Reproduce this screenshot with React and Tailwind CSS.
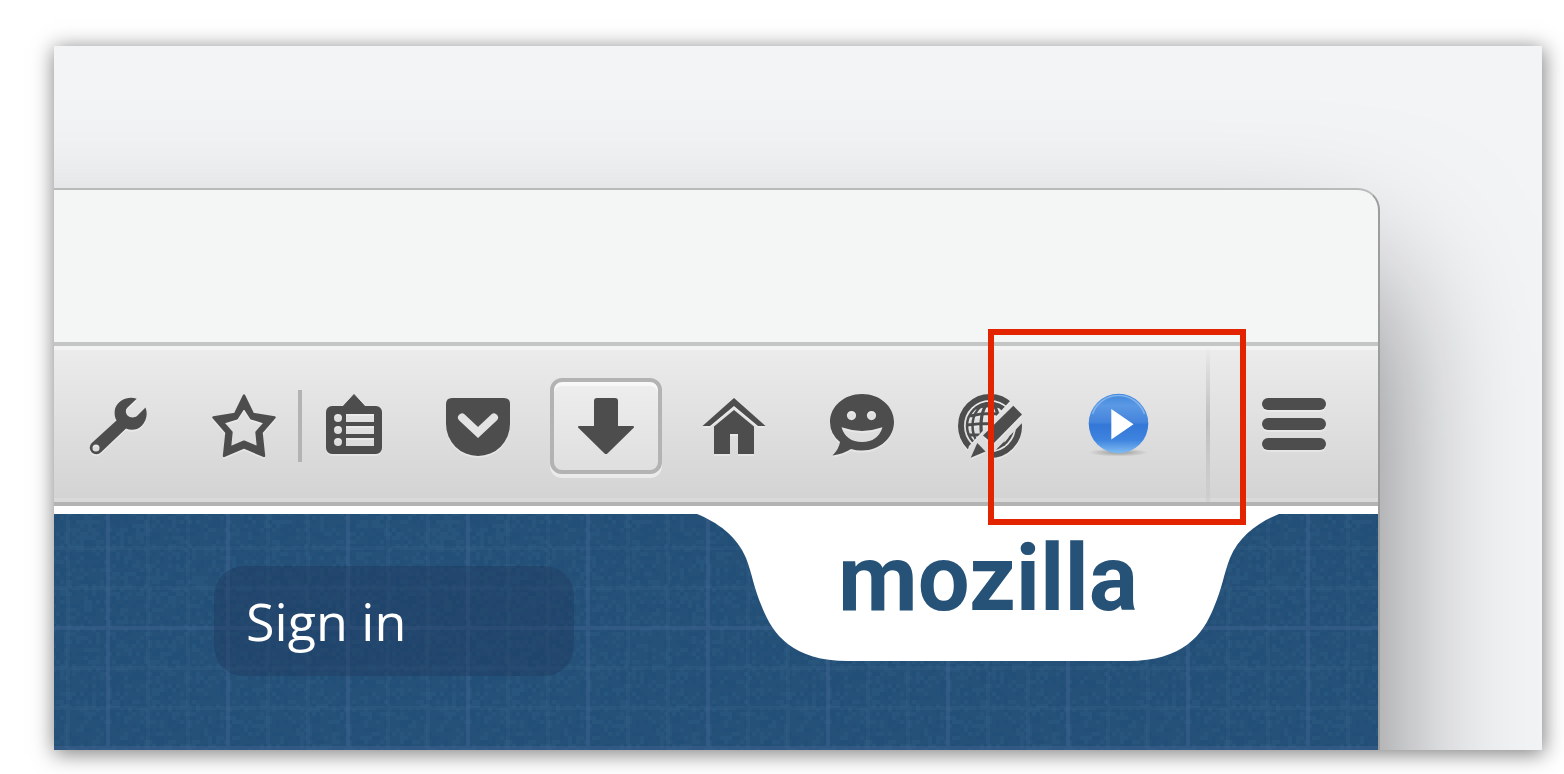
import React from "react";

const ICON = "#4d4d4d";

function Icon({ children, shadow = true }) {
  return (
    <svg
      viewBox="0 0 64 72"
      aria-hidden="true"
      className={
        shadow
          ? "h-[72px] w-16 overflow-visible drop-shadow-[0_2px_0_rgba(255,255,255,0.3)]"
          : "h-[72px] w-16 overflow-visible"
      }
      fill={ICON}
    >
      {children}
    </svg>
  );
}

function ToolButton({ label, children }) {
  return (
    <button type="button" aria-label={label} className="flex h-24 w-28 shrink-0 items-center justify-center">
      {children}
    </button>
  );
}

function WrenchIcon() {
  return (
    <Icon>
      <path
        transform="translate(-2 0)"
        fillRule="evenodd"
        d="M52.7 8.7C44 6 34.5 10 31.3 18C30 22.500 30.500 27 32.500 30.500L7.500 53.300A6.500 6.500 0 1 0 17 62.200L42 38.500C47 40.800 53 40.300 57.500 36C62.500 31 64 24 61.500 17.500L53.500 25.500C50.500 28.300 46 28 43.500 25.500C41.300 23 41.300 19.800 43.500 17.500ZM12 54.600A3.500 3.500 0 1 1 12 61.600A3.500 3.500 0 1 1 12 54.600Z"
      />
    </Icon>
  );
}

function StarIcon() {
  return (
    <Icon>
      <path
        fillRule="evenodd"
        stroke={ICON}
        strokeWidth="2.4"
        strokeLinejoin="round"
        d="M32 5.500L41 24L62.500 27.500L49.500 42.500L52 66L32 57.500L12 66L14.500 42.500L1.500 27.500L23 24ZM32 17L24.800 28.300L11 32.500L19.500 42.200L18 57.500L32 51.600L46 57.500L44.500 42.200L53 32.500L39.200 28.300Z"
      />
    </Icon>
  );
}

function ListIcon() {
  return (
    <Icon>
      <path d="M32 4.500L21 16.500H43Z" stroke={ICON} strokeLinejoin="round" />
      <path
        fillRule="evenodd"
        d="M10 16H54A6 6 0 0 1 60 22V58A6 6 0 0 1 54 64H10A6 6 0 0 1 4 58V22A6 6 0 0 1 10 16ZM24 24V32H52V24ZM24 36V44H52V36ZM24 48V56H52V48ZM16 24A4 4 0 1 0 16 32A4 4 0 1 0 16 24ZM16 36A4 4 0 1 0 16 44A4 4 0 1 0 16 36ZM16 48A4 4 0 1 0 16 56A4 4 0 1 0 16 48Z"
      />
    </Icon>
  );
}

function PocketIcon() {
  return (
    <Icon>
      <path d="M6 8H58Q64 8 64 14V34A32 32 0 0 1 0 34V14Q0 8 6 8Z" />
      <path
        d="M16 27.500L32 42.500L48 27.500"
        fill="none"
        stroke="#e3e3e3"
        strokeWidth="8"
        strokeLinecap="round"
      />
    </Icon>
  );
}

function DownloadIcon() {
  return (
    <Icon shadow={false}>
      <path
        stroke={ICON}
        strokeWidth="2"
        strokeLinejoin="round"
        d="M23 9H41Q43 9 43 11V37H59L33 62.500Q32 63.500 31 62.500L5 37H21V11Q21 9 23 9Z"
      />
    </Icon>
  );
}

function HomeIcon() {
  return (
    <Icon>
      <path d="M32 8L63.500 36H56L32 16L8 36H0.500Z" />
      <path d="M32 20L52 36.500V64H36V44H28V64H12V36.500Z" />
    </Icon>
  );
}

function ChatIcon() {
  return (
    <Icon>
      <path
        fillRule="evenodd"
        d="M32 4C50 4 64 16.500 64 32S50 60.500 32 60.500Q26 60.500 21 59Q13 64 2.500 65.500Q9 59 10 52Q0 44 0 32C0 16.500 14 4 32 4ZM21.500 21A4.600 4.600 0 1 0 21.500 30.200A4.600 4.600 0 1 0 21.500 21ZM41.500 21A4.600 4.600 0 1 0 41.500 30.200A4.600 4.600 0 1 0 41.500 21ZM11.500 37.300Q32 44.500 52.500 37.300Q48 52 32 52Q16 52 11.500 37.300Z"
      />
    </Icon>
  );
}

function GlobeIcon() {
  return (
    <Icon>
      <defs>
        <mask id="globe-cut">
          <rect x="-4" y="0" width="72" height="72" fill="#fff" />
          <path d="M52 11L68 4V29L30 68L26 74L6 72L11 56Z" fill="#000" />
        </mask>
      </defs>
      <g mask="url(#globe-cut)" fill="none" stroke={ICON}>
        <circle cx="32" cy="36" r="29" strokeWidth="6" />
        <circle cx="32" cy="36" r="23" strokeWidth="2.500" />
        <g strokeWidth="3.200">
          <path d="M32 12V60M12 26Q32 21 52 26M9 35Q32 32 55 35M11 45Q32 45 53 45M17 54Q32 56 47 54" />
          <ellipse cx="32" cy="36" rx="9" ry="23" />
          <ellipse cx="32" cy="36" rx="17.500" ry="23" strokeWidth="2.500" />
        </g>
        <path strokeWidth="2.500" d="M18 18Q32 14 46 18" />
      </g>
      <path d="M55.300 15.700L64 24.500L35 54L25 45.500Z" />
      <path d="M12.700 67.700L19.300 53L27.500 61.500Z" />
    </Icon>
  );
}

function PlayIcon() {
  return (
    <Icon shadow={false}>
      <defs>
        <linearGradient id="play-fill" x1="0" y1="0" x2="0" y2="1">
          <stop offset="0" stopColor="#3f87dc" />
          <stop offset="0.200" stopColor="#5b98e4" />
          <stop offset="0.480" stopColor="#4484dc" />
          <stop offset="0.520" stopColor="#3377d8" />
          <stop offset="0.780" stopColor="#3f84df" />
          <stop offset="1" stopColor="#82bdf3" />
        </linearGradient>
        <radialGradient id="play-shade">
          <stop offset="0" stopColor="#000" stopOpacity="0.300" />
          <stop offset="1" stopColor="#000" stopOpacity="0" />
        </radialGradient>
      </defs>
      <ellipse cx="32.500" cy="62.500" rx="30" ry="4" fill="url(#play-shade)" />
      <circle cx="32.500" cy="33.500" r="29.800" fill="url(#play-fill)" />
      <path
        d="M6.500 24A27.500 27.500 0 0 1 58.500 24"
        fill="none"
        stroke="#8ebcf0"
        strokeOpacity="0.800"
        strokeWidth="1.500"
      />
      <path d="M25.300 19L47.500 34.300L25.300 49.500Z" fill="#fff" />
    </Icon>
  );
}

function MenuIcon() {
  return (
    <Icon>
      <rect x="0" y="8" width="64" height="12" rx="6" />
      <rect x="0" y="28" width="64" height="12" rx="6" />
      <rect x="0" y="48" width="64" height="12" rx="6" />
    </Icon>
  );
}

// Repeating speckle made of 4px cells, split into a dark and a light layer.
function speckle() {
  let seed = 7;
  let dark = "";
  let light = "";
  for (let y = 0; y < 240; y += 4) {
    for (let x = 0; x < 360; x += 4) {
      seed = (seed * 16807) % 2147483647;
      const r = seed / 2147483647;
      const cell = `M${x} ${y}h4v4h-4z`;
      if (r < 0.25) dark += cell;
      else if (r > 0.75) light += cell;
    }
  }
  return { dark, light };
}

const NOISE = speckle();

function Blueprint() {
  return (
    <svg className="absolute inset-0 h-full w-full" aria-hidden="true">
      <defs>
        <pattern id="noise" x="2" y="2" width="360" height="240" patternUnits="userSpaceOnUse">
          <path d={NOISE.dark} fill="#1d4a72" fillOpacity="0.400" />
          <path d={NOISE.light} fill="#2b5a80" fillOpacity="0.350" />
        </pattern>
        <pattern id="grid" x="52" y="-8" width="120" height="120" patternUnits="userSpaceOnUse">
          <path d="M40 0h4v120h-4zM80 0h4v120h-4zM0 40h120v4h-120zM0 80h120v4h-120z" fill="#6f93a8" fillOpacity="0.060" />
          <path d="M0 0h4v120h-4zM0 0h120v4h-120z" fill="#5f78a8" fillOpacity="0.220" />
        </pattern>
      </defs>
      <rect width="100%" height="100%" fill="#255179" />
      <rect width="100%" height="100%" fill="url(#noise)" />
      <rect width="100%" height="100%" fill="url(#grid)" />
    </svg>
  );
}

function Toolbar() {
  return (
    <div className="relative flex items-center justify-end gap-4 border-y-4 border-t-[#c4c6c5] border-b-[#b3b3b3] bg-linear-to-b from-[#ececec] to-[#d3d3d3] pr-7 shadow-[inset_0_4px_0_rgba(255,255,255,0.4),inset_0_-4px_0_rgba(255,255,255,0.15)]">
      <div className="flex items-center gap-4 pt-1">
        <ToolButton label="Developer tools">
          <WrenchIcon />
        </ToolButton>
        <div className="flex items-center">
          <button type="button" aria-label="Bookmark this page" className="flex h-24 w-[108px] items-center justify-center">
            <StarIcon />
          </button>
          <div className="h-[72px] w-1 bg-[#b3b3b3]" />
          <button type="button" aria-label="Show bookmarks" className="flex h-24 w-[104px] items-center justify-center">
            <ListIcon />
          </button>
        </div>
        <ToolButton label="Save to Pocket">
          <PocketIcon />
        </ToolButton>
        <button
          type="button"
          aria-label="Downloads"
          className="flex h-24 w-28 shrink-0 items-center justify-center rounded-xl border-4 border-[#b3b3b3] bg-linear-to-b from-[#eeeeee] to-[#dfdfdf] shadow-[0_4px_0_rgba(255,255,255,0.5),inset_0_4px_1px_rgba(255,255,255,0.6)]"
        >
          <DownloadIcon />
        </button>
        <ToolButton label="Home">
          <HomeIcon />
        </ToolButton>
        <ToolButton label="Chat">
          <ChatIcon />
        </ToolButton>
        <ToolButton label="Web page editor">
          <GlobeIcon />
        </ToolButton>
        <ToolButton label="Play">
          <PlayIcon />
        </ToolButton>
      </div>
      <div className="ml-4 mr-3 h-[156px] w-1 bg-linear-to-b from-transparent via-[#bfc1c1] to-[#bfc1c1]/30" />
      <div className="pt-1">
        <ToolButton label="Open menu">
          <MenuIcon />
        </ToolButton>
      </div>
      <div className="pointer-events-none absolute -top-[17px] right-[132px] z-10 h-[196px] w-[258px] border-6 border-[#e32400]" />
    </div>
  );
}

function PageHeader() {
  return (
    <main className="relative flex flex-1 items-start justify-between border-t-8 border-white pl-40 pr-[99px]">
      <Blueprint />
      <a
        href="#sign-in"
        className="relative mt-[52px] flex h-[110px] w-[360px] shrink-0 items-center rounded-[30px] bg-[#1e3358]/35 pl-8 text-[52px] font-medium leading-[72px] text-white"
      >
        Sign in
      </a>
      <a
        href="#mozilla"
        className="relative flex h-[148px] w-[582px] shrink-0 justify-center font-['Roboto',sans-serif] text-[92px] font-bold leading-[130px] text-[#265278]"
      >
        <svg viewBox="0 0 582 148" aria-hidden="true" className="absolute inset-0 h-full w-full" fill="#fff">
          <path d="M0 0C20 8 40 22 49 44C55 59 57 75 65 93C76 121 96 147 151 147H431C486 147 506 121 517 93C525 75 527 59 533 44C542 22 562 8 582 0Z" />
        </svg>
        <span className="relative">mozilla</span>
      </a>
    </main>
  );
}

export default function App() {
  return (
    <div className="flex min-h-screen bg-white pb-6 pl-[54px] pr-[22px] pt-[46px] font-['Open_Sans',sans-serif]">
      <div className="flex flex-1 shadow-[1px_3px_20px_1px_rgba(0,0,0,0.5)]">
        <div className="flex flex-1 overflow-hidden bg-[#f3f4f6] pr-[162px] pt-[142px]">
          <div className="relative flex flex-1 flex-col">
            <div className="absolute -bottom-60 -left-60 right-0 top-0 rounded-[22px] shadow-[0_90px_150px_rgba(0,0,0,0.5)]" />
            <div className="relative flex flex-1 flex-col overflow-hidden rounded-tr-[22px] border-r-2 border-t-2 border-r-[#9c9d9d] border-t-[#b9bbba] bg-[#f4f6f5]">
              <div className="h-[152px]" />
              <Toolbar />
              <PageHeader />
            </div>
          </div>
        </div>
      </div>
    </div>
  );
}
